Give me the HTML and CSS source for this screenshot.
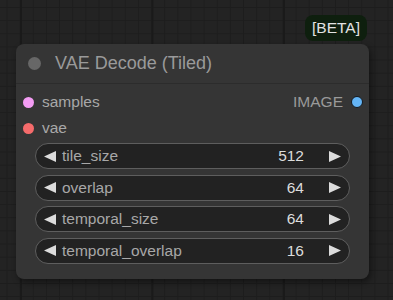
FILE: index.html
```html
<!DOCTYPE html>
<html lang="en">
<head>
    <meta charset="UTF-8">
    <meta name="viewport" content="width=device-width, initial-scale=1.0">
    <title>VAE Decode (Tiled)</title>
    <link rel="stylesheet" href="styles.css">
</head>
<body>
    <div class="canvas">
        <div class="node">
            <span class="badge">[BETA]</span>
            <div class="title">
                <span class="title-dot"></span>
                <span>VAE Decode (Tiled)</span>
            </div>
            <div class="slots">
                <div class="slot-row">
                    <div class="slot"><span class="dot dot-samples"></span>samples</div>
                    <div class="slot slot-out">IMAGE<span class="dot dot-image"></span></div>
                </div>
                <div class="slot-row">
                    <div class="slot"><span class="dot dot-vae"></span>vae</div>
                </div>
            </div>
            <div class="widgets">
                <div class="widget">
                    <svg class="arrow" viewBox="0 0 12 11"><polygon points="12,0 12,11 0,5.5"/></svg>
                    <span class="label">tile_size</span>
                    <span class="value">512</span>
                    <svg class="arrow" viewBox="0 0 12 11"><polygon points="0,0 0,11 12,5.5"/></svg>
                </div>
                <div class="widget">
                    <svg class="arrow" viewBox="0 0 12 11"><polygon points="12,0 12,11 0,5.5"/></svg>
                    <span class="label">overlap</span>
                    <span class="value">64</span>
                    <svg class="arrow" viewBox="0 0 12 11"><polygon points="0,0 0,11 12,5.5"/></svg>
                </div>
                <div class="widget">
                    <svg class="arrow" viewBox="0 0 12 11"><polygon points="12,0 12,11 0,5.5"/></svg>
                    <span class="label">temporal_size</span>
                    <span class="value">64</span>
                    <svg class="arrow" viewBox="0 0 12 11"><polygon points="0,0 0,11 12,5.5"/></svg>
                </div>
                <div class="widget">
                    <svg class="arrow" viewBox="0 0 12 11"><polygon points="12,0 12,11 0,5.5"/></svg>
                    <span class="label">temporal_overlap</span>
                    <span class="value">16</span>
                    <svg class="arrow" viewBox="0 0 12 11"><polygon points="0,0 0,11 12,5.5"/></svg>
                </div>
            </div>
        </div>
    </div>
</body>
</html>
```

FILE: styles.css
```css
body {
    margin: 0;
    font-family: "Liberation Sans", Arial, sans-serif;
    background-color: #232323;
}
.canvas {
    width: 393px;
    height: 300px;
    overflow: hidden;
    background-color: #232323;
    background-image:
        linear-gradient(90deg, #1a1a1a 2px, transparent 2px),
        linear-gradient(90deg, #1d1d1d 1px, transparent 1px),
        linear-gradient(#1d1d1d 1px, transparent 1px);
    background-size: 131.5px 100%, 13.15px 100%, 100% 13.15px;
    background-position: 20px 0, 6.5px 0, 0 7px;
}
.node {
    position: relative;
    margin: 44px 0 0 16px;
    width: 353px;
    padding-bottom: 15px;
    background: #353535;
    border-radius: 8px;
    box-shadow: 2px 3px 6px rgba(0, 0, 0, 0.45);
}
.badge {
    position: absolute;
    top: -29px;
    right: 2px;
    height: 26px;
    padding: 0 7px;
    line-height: 26px;
    font-size: 15.5px;
    color: #e2e2e2;
    background: #0e1f0e;
    border-radius: 8px;
}
.title {
    display: flex;
    align-items: center;
    height: 39px;
    padding-left: 12px;
    border-bottom: 1px solid #2c2c2c;
    font-size: 18px;
    color: #9a9a9a;
}
.title-dot {
    width: 13px;
    height: 13px;
    margin-right: 14px;
    border-radius: 50%;
    background: #676767;
}
.slots {
    padding-top: 5px;
}
.slot-row {
    display: flex;
    justify-content: space-between;
    align-items: center;
    height: 26px;
}
.slot {
    display: flex;
    align-items: center;
    padding-left: 7px;
    font-size: 15.5px;
    color: #a8a8a8;
}
.slot .dot {
    margin-right: 8px;
}
.slot-out {
    padding: 0 6px 0 0;
    color: #9a9a9a;
}
.slot-out .dot {
    margin: 0 0 0 8px;
}
.dot {
    width: 11px;
    height: 11px;
    border-radius: 50%;
    box-sizing: border-box;
}
.dot-samples {
    background: #f39cf3;
}
.dot-vae {
    background: #f56b6b;
}
.dot-image {
    width: 12px;
    height: 12px;
    background: #64b5f6;
    border: 1.5px solid #15191d;
}
.widgets {
    display: flex;
    flex-direction: column;
    gap: 5.5px;
    margin: 2px 19px 0;
}
.widget {
    display: flex;
    align-items: center;
    height: 26px;
    padding: 0 8px;
    box-sizing: border-box;
    background: #222;
    border: 1px solid #5e5e5e;
    border-radius: 13px;
    font-size: 15.5px;
}
.arrow {
    width: 12px;
    height: 11px;
    fill: #dcdcdc;
}
.label {
    flex: 1;
    margin-left: 6px;
    color: #a8a8a8;
}
.value {
    margin-right: 25px;
    color: #dcdcdc;
}
```
